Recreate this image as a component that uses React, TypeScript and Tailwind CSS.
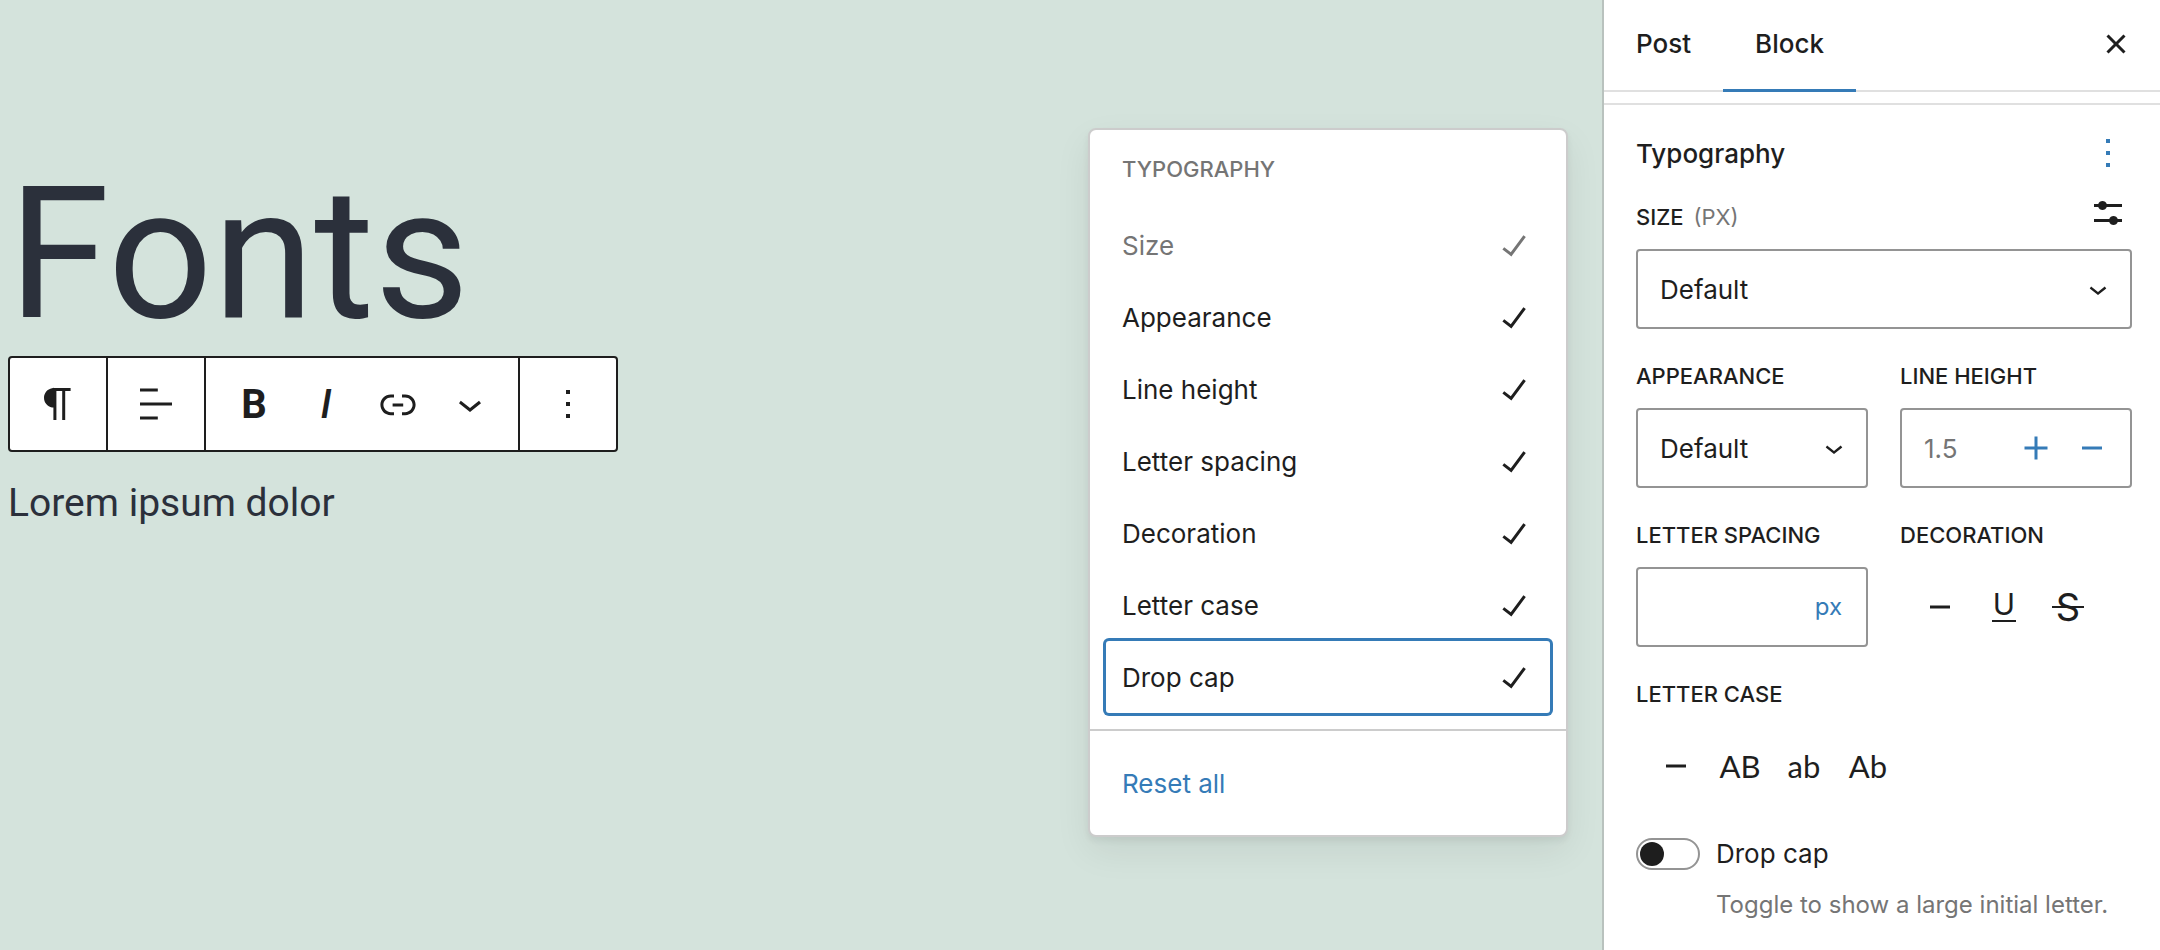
import React, { useState } from 'react';

const FONT = "font-['Inter','Liberation_Sans',sans-serif]";

const PATHS = {
  paragraph: 'M18.3 4H9.9v-.1l-.9.2c-2.3.4-4 2.4-4 4.8s1.7 4.4 4 4.8l.7.1V20h1.5V5.5h2.9V20h1.5V5.5h2.7V4z',
  align: 'M4 19.8h8.9v-1.5H4v1.5zm8.9-15.6H4v1.5h8.9V4.2zm-8.9 7v1.5h16v-1.5H4z',
  link: 'M15.6 7.2H14v1.5h1.6c2 0 3.7 1.7 3.7 3.7s-1.7 3.7-3.7 3.7H14v1.5h1.6c2.8 0 5.2-2.3 5.2-5.2 0-2.9-2.3-5.2-5.2-5.2zM4.7 12.4c0-2 1.7-3.7 3.7-3.7H10V7.2H8.4c-2.9 0-5.2 2.3-5.2 5.2 0 2.9 2.3 5.2 5.2 5.2H10v-1.5H8.4c-2 0-3.7-1.7-3.7-3.7zm4.6.9h5.3v-1.5H9.3v1.5z',
  chevron: 'M17.5 11.6L12 16l-5.5-4.4.9-1.2L12 14l4.5-3.6 1 1.2z',
  more: 'M13 19h-2v-2h2v2zm0-6h-2v-2h2v2zm0-6h-2V5h2v2z',
  check: 'M16.7 7.1l-6.3 8.5-3.3-2.5-.9 1.2 4.5 3.4L17.9 8z',
  close: 'M12 13.06l3.712 3.713 1.061-1.06L13.061 12l3.712-3.712-1.06-1.06L12 10.938 8.288 7.227l-1.061 1.06L10.939 12l-3.712 3.712 1.06 1.061L12 13.061z',
  settings:
    'm19 7.5h-7.628c-.3089-.87389-1.1423-1.5-2.122-1.5-.97966 0-1.81309.62611-2.12197 1.5h-2.12803v1.5h2.12803c.30888.87389 1.14231 1.5 2.12197 1.5.9797 0 1.8131-.62611 2.122-1.5h7.628z M19 15h-2.128c-.3089-.8739-1.1423-1.5-2.122-1.5s-1.8131.6261-2.122 1.5h-7.628v1.5h7.628c.3089.8739 1.1423 1.5 2.122 1.5s1.8131-.6261 2.122-1.5h2.128z',
  plus: 'M11.25 6.2h1.5v5.05h5v1.5h-5v5.05h-1.5v-5.05h-5v-1.5h5z',
  minus: 'M7 11.25h10v1.5H7z',
};

const Icon: React.FC<{ name: keyof typeof PATHS; className?: string }> = ({ name, className = 'size-12' }) => (
  <svg viewBox="0 0 24 24" className={`shrink-0 fill-current ${className}`} aria-hidden="true">
    <path d={PATHS[name]} />
  </svg>
);

const TOOLBAR_BUTTON = 'flex w-18 items-center justify-center';

const Toolbar: React.FC = () => (
  <div role="toolbar" aria-label="Block tools" className="flex h-24 w-fit divide-x-2 divide-[#1e1e1e] rounded border-2 border-[#1e1e1e] bg-white text-[#1e1e1e]">
    <div className="flex px-3">
      <button aria-label="Paragraph" className={TOOLBAR_BUTTON}><Icon name="paragraph" /></button>
    </div>
    <div className="flex px-3">
      <button aria-label="Align" className={TOOLBAR_BUTTON}><Icon name="align" /></button>
    </div>
    <div className="flex px-3">
      <button aria-label="Bold" className={`${TOOLBAR_BUTTON} pt-0.5 text-[40px] font-bold`}>B</button>
      <button aria-label="Italic" className={`${TOOLBAR_BUTTON} pt-0.5 text-[40px] font-medium italic`}>I</button>
      <button aria-label="Link" className={TOOLBAR_BUTTON}><Icon name="link" /></button>
      <button aria-label="More formatting" className={TOOLBAR_BUTTON}><Icon name="chevron" /></button>
    </div>
    <div className="flex px-3">
      <button aria-label="Options" className={TOOLBAR_BUTTON}><Icon name="more" /></button>
    </div>
  </div>
);

const MENU_ITEMS = ['Size', 'Appearance', 'Line height', 'Letter spacing', 'Decoration', 'Letter case', 'Drop cap'];

const TypographyMenu: React.FC = () => (
  <div
    role="menu"
    aria-label="Typography options"
    className={`absolute top-32 right-[34px] w-120 rounded-lg border-2 border-[#ccc] bg-white text-[26px] text-[#1e1e1e] shadow-[0_4px_6px_rgba(0,0,0,0.06),0_14px_36px_rgba(0,0,0,0.07)] ${FONT}`}
  >
    <div className="border-b-2 border-[#ccc] px-4 pb-4">
      <h2 className="px-4 pt-6 pb-[25px] text-[22px] leading-[30px] font-medium text-[#757575] uppercase">Typography</h2>
      {MENU_ITEMS.map((item) => (
        <button
          key={item}
          role="menuitemcheckbox"
          aria-checked="true"
          disabled={item === 'Size'}
          className={`flex h-18 w-full items-center justify-between rounded-[3px] pr-3 pl-4 disabled:text-[#757575] ${item === 'Drop cap' ? 'ring-3 ring-[#357bb7]' : ''}`}
        >
          {item}
          <Icon name="check" />
        </button>
      ))}
    </div>
    <div className="p-4">
      <button role="menuitem" className="flex h-18 w-full items-center px-4 text-[#357bb7]">Reset all</button>
    </div>
  </div>
);

const LABEL = 'block text-[22px] leading-[31px] font-medium uppercase';
const BOX = 'h-20 w-full rounded border-2 border-[#949494] bg-white';

const SelectBox: React.FC<{ id: string }> = ({ id }) => (
  <div className="grid items-center">
    <select id={id} className={`${BOX} col-start-1 row-start-1 appearance-none px-[22px]`}>
      <option>Default</option>
    </select>
    <Icon name="chevron" className="pointer-events-none col-start-1 row-start-1 mr-4 size-9 justify-self-end" />
  </div>
);

const ICON_BUTTON = 'flex h-20 w-16 items-center justify-center';

const Sidebar: React.FC = () => {
  const [dropCap, setDropCap] = useState(false);

  return (
    <aside className="w-[558px] shrink-0 border-l-2 border-[#b9c2be] bg-white text-[26px] text-[#1e1e1e]">
      <header className="flex h-23 items-stretch font-medium shadow-[inset_0_-2px_0_#e0e0e0]">
        <button className="border-b-3 border-transparent px-8 pb-0.5">Post</button>
        <button className="border-b-3 border-[#357bb7] px-8 pb-0.5">Block</button>
        <button aria-label="Close settings" className="mr-5 ml-auto pb-1"><Icon name="close" /></button>
      </header>

      <section className="mt-[11px] border-t-2 border-[#e0e0e0] pt-6 pr-7 pb-7 pl-8">
        <div className="flex items-center justify-between">
          <h2 className="font-medium">Typography</h2>
          <button aria-label="Typography options" className="text-[#357bb7]"><Icon name="more" /></button>
        </div>

        <div className="mt-3 mb-3 flex items-center justify-between">
          <label htmlFor="size" className={`${LABEL} pt-2`}>
            Size <span className="ml-1 font-normal text-[#757575]">(px)</span>
          </label>
          <button aria-label="Set custom size"><Icon name="settings" /></button>
        </div>
        <SelectBox id="size" />

        <div className="mt-8 grid grid-cols-2 gap-8">
          <div>
            <label htmlFor="appearance" className={`${LABEL} mb-4`}>Appearance</label>
            <SelectBox id="appearance" />
          </div>
          <div>
            <label htmlFor="line-height" className={`${LABEL} mb-4`}>Line height</label>
            <div className={`${BOX} flex items-center pr-[14px] pl-[22px]`}>
              <input id="line-height" placeholder="1.5" className="w-full min-w-0 placeholder:text-[#757575]" />
              <button aria-label="Increment" className="mr-2 text-[#357bb7]"><Icon name="plus" /></button>
              <button aria-label="Decrement" className="text-[#357bb7]"><Icon name="minus" /></button>
            </div>
          </div>
          <div>
            <label htmlFor="letter-spacing" className={`${LABEL} mb-4`}>Letter spacing</label>
            <div className={`${BOX} flex items-center px-6`}>
              <input id="letter-spacing" className="w-full min-w-0" />
              <button aria-label="Unit" className="text-2xl text-[#357bb7]">px</button>
            </div>
          </div>
          <div>
            <h3 className={`${LABEL} mb-4`}>Decoration</h3>
            <div className="flex px-2">
              <button aria-label="None" className={ICON_BUTTON}><Icon name="minus" /></button>
              <button aria-label="Underline" className={ICON_BUTTON}>
                <span className="border-b-2 border-current px-px pb-1 text-[30px] leading-6">U</span>
              </button>
              <button aria-label="Strikethrough" className={ICON_BUTTON}>
                <span className="grid items-center justify-items-center text-[38px] leading-9">
                  <span className="col-start-1 row-start-1">S</span>
                  <span className="col-start-1 row-start-1 h-[2px] w-8 bg-current" />
                </span>
              </button>
            </div>
          </div>
        </div>

        <div className="mt-8">
          <h3 className={`${LABEL} mb-4`}>Letter case</h3>
          <div className="flex px-2 font-['Lato','Noto_Sans',sans-serif] text-[31px]">
            <button aria-label="None" className={ICON_BUTTON}><Icon name="minus" /></button>
            <button className={ICON_BUTTON}>AB</button>
            <button className={ICON_BUTTON}>ab</button>
            <button className={ICON_BUTTON}>Ab</button>
          </div>
        </div>

        <div className="mt-8 flex items-center gap-4">
          <input
            id="drop-cap"
            type="checkbox"
            role="switch"
            checked={dropCap}
            onChange={(e) => setDropCap(e.target.checked)}
            className="h-8 w-16 appearance-none rounded-full border-2 border-[#949494] p-[2px] before:block before:size-6 before:rounded-full before:bg-[#1e1e1e] checked:before:ml-8"
          />
          <label htmlFor="drop-cap" className="leading-8">Drop cap</label>
        </div>
        <p className="mt-5 ml-20 text-2xl leading-[30px] text-[#757575]">Toggle to show a large initial letter.</p>
      </section>
    </aside>
  );
};

export default function App() {
  return (
    <div className={`flex min-h-screen bg-[#d4e3dc] ${FONT}`}>
      <main className="relative min-w-0 grow pt-38 pl-2 font-['Roboto','Inter',sans-serif] text-[#2b303b]">
        <h1 className="text-[184px] leading-[204px]">Fonts</h1>
        <Toolbar />
        <p className="mt-4 text-[39px] leading-[70px]">Lorem ipsum dolor</p>
        <TypographyMenu />
      </main>
      <Sidebar />
    </div>
  );
}
